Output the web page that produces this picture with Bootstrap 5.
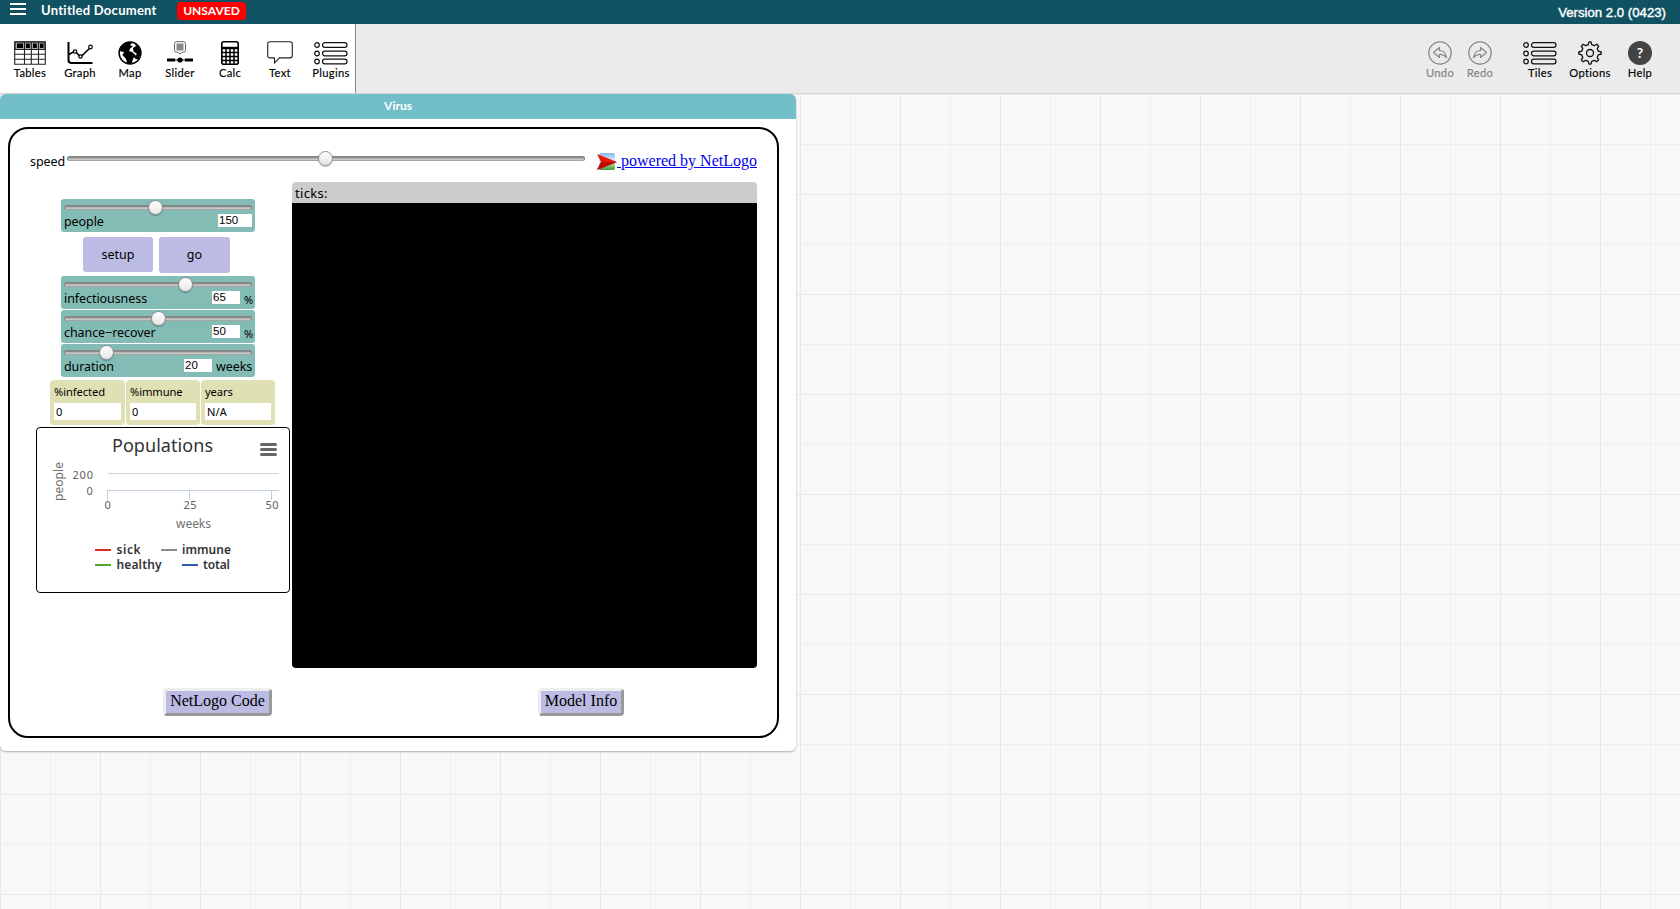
<!DOCTYPE html>
<html lang="en">
<head>
<meta charset="utf-8">
<title>Untitled Document</title>
<link rel="stylesheet" href="https://cdn.jsdelivr.net/npm/bootstrap@5.3.0/dist/css/bootstrap.min.css">
<script src="https://cdn.jsdelivr.net/npm/bootstrap@5.3.0/dist/js/bootstrap.bundle.min.js"></script>
<style>
  body { height: 909px; overflow: hidden; color: #000; font-family: Lato, sans-serif; line-height: 1; background: #f7f7f7; }
  svg { display: block; overflow: visible; }
  .topbar { height: 24px; background: #105262; color: #fff; }
  .menu-icon { margin: 3px 0 0 10px; }
  .doc-name { font-size: 13px; font-weight: 700; margin-left: 15px; padding-top: 4px; width: 117px; letter-spacing: .27px; }
  .unsaved { background: #f00; font-size: 12px; font-weight: 700; border-radius: 4px; width: 69px; height: 18px; line-height: 17px; margin: 2px 0 0 19px; }
  .version { font: 13.2px/1 "Liberation Sans", sans-serif; -webkit-text-stroke: .4px #fff; margin-right: 14px; padding-top: 6px; }
  .toolbar { height: 70px; background: #ebebeb; border-bottom: 1px solid #d6d6d6; }
  .tools { width: 356px; background: #fff; border-right: 1px solid #888; padding-left: 5px; }
  .tool { width: 50px; flex-shrink: 0; padding-top: 17px; font-size: 11.2px; font-weight: 400; letter-spacing: .3px; white-space: nowrap; -webkit-text-stroke: .15px currentColor; }
  .tool svg { height: 24px; margin-bottom: 2px; -webkit-text-stroke: 0; }
  .tool.narrow { width: 40px; }
  .tool.wide { width: 52px; }
  .tool.off { color: #848484; }
  .workspace {
    height: 815px;
    background:
      linear-gradient(90deg, #e9e9e9 1px, transparent 1px) 0 0/100px 100px,
      linear-gradient(#e9e9e9 1px, transparent 1px) 0 0/100px 100px,
      linear-gradient(90deg, #f0f0f0 1px, transparent 1px) 0 0/50px 50px,
      linear-gradient(#f0f0f0 1px, transparent 1px) 0 0/50px 50px, #f8f8f8;
  }
  .tile { width: 796px; height: 657px; background: #fff; border-radius: 6px; box-shadow: 0 1px 2px rgba(0,0,0,.3); overflow: hidden; }
  .tile-title { height: 25px; padding-bottom: 2px; background: #72bfca; color: #fff; font-size: 12px; font-weight: 700; }
  .model { width: 771px; height: 611px; margin: 8px 0 0 8px; border: 2px solid #000; border-radius: 20px; font: 12.5px/1 "Noto Sans", sans-serif; }
  .speed-row { height: 53px; padding: 0 20px; }
  .speed-label { width: 37px; padding-top: 27px; letter-spacing: -.1px; }
  .speed-slider { width: 518px; margin-top: 27px; }
  .track { height: 5px; border-radius: 2.5px; background: linear-gradient(#707070, #b0b0b0 40%, #cfcfcf); border: 1px solid #858585; border-bottom-color: #a5a5a5; position: relative; }
  .thumb { position: absolute; top: -6px; width: 15px; height: 15px; margin-left: -8px; border-radius: 50%; border: 1px solid #8f8f8f; background: linear-gradient(#fdfdfd, #e6e6e6); box-shadow: 0 1px 1px rgba(0,0,0,.25); }
  .powered { font: 16px/18px "Liberation Serif", serif; color: #00e; margin: 23px 0 0 12px; text-decoration: none; }
  .powered u { white-space: pre; }
  .powered svg { margin-top: 1px; }
  .controls { width: 282px; }
  .widget { width: 194px; height: 33px; margin: 0 0 1px 51px; padding: 6px 3px 0; background: #82bcb5; border-radius: 3px; }
  .widget .line { height: 13px; margin-top: 5.5px; white-space: nowrap; letter-spacing: -.07px; }
  .entry { background: #fff; height: 13px; font: 11.5px/13px "Liberation Sans", sans-serif; padding-left: 1px; letter-spacing: 0; margin-top: -1.5px; }
  .unit { width: 8px; margin-left: 4px; }
  .unit.pct { font-size: 11px; padding-top: 1px; letter-spacing: -.5px; }
  .unit.word { width: 36px; }
  .push { background: #bcbbe4; border-radius: 3px; padding-top: 1px; }
  .monitor { background: #dfe0b3; border-radius: 4px; height: 45px; padding: 6px 4px 0; font-size: 11.2px; letter-spacing: -.1px; }
  .monitor div { background: #fff; height: 17px; line-height: 17px; margin-top: 6px; padding-left: 2px; font-size: 11px; letter-spacing: .1px; }
  .plot { width: 254px; height: 166px; margin: 2px 0 0 26px; border: 1px solid #000; border-radius: 4px; }
  .world { width: 465px; }
  .ticks { height: 21px; background: #ccc; border-radius: 4px 4px 0 0; padding: 5px 3px; font-size: 13px; letter-spacing: .3px; }
  .patches { height: 465px; background: #000; border-radius: 0 0 4px 4px; }
  .tab-btn { height: 28px; border: 3px solid; border-color: #eee #999 #999 #eee; border-radius: 4px; background: #bcbbe4; font: 16px/20px "Liberation Serif", serif; padding: 0 0 2px; color: #000; }
</style>
</head>
<body>
<header class="topbar d-flex align-items-start">
  <svg class="menu-icon" width="16" height="13" stroke="#fff" stroke-width="2"><path d="M0 1h16M0 6h16M0 11h16"/></svg>
  <div class="doc-name text-nowrap">Untitled Document</div>
  <div class="unsaved text-center">UNSAVED</div>
  <div class="version ms-auto">Version 2.0 (0423)</div>
</header>
<nav class="toolbar d-flex justify-content-between">
  <div class="tools d-flex">
    <div class="tool d-flex flex-column align-items-center">
      <svg width="32" height="24" fill="none" stroke="#222" stroke-width="1.1"><path d="M1 1h30v7.500H1z" fill="#aaa"/><path d="M.7.7h30.6v22.6H.7zM.7 8.5h30.6M.7 13.3h30.6M.7 18.2h30.6M10.5.7v22.6M17.3.7v22.6M24.500.7v22.6"/><path d="M3 2.5h6v4.400H3zM12 2.500h3.800v4.400H12zM19 2.500h3.800v4.400H19zM26 2.500h3.500v4.400H26z" fill="#000" stroke="none"/></svg>Tables</div>
    <div class="tool d-flex flex-column align-items-center">
      <svg width="26" height="24" fill="none" stroke="#000" stroke-width="2"><path d="M1.500 1v18q0 3 3 3h21"/><path d="M2 13.500l6-3.500 5.500 6 10-9.500" stroke-width="1.6"/><g fill="#fff" stroke-width="1.2"><circle cx="8" cy="10.500" r="1.700"/><circle cx="13.500" cy="15.500" r="1.700"/><circle cx="23.500" cy="6" r="1.800"/></g></svg>Graph</div>
    <div class="tool d-flex flex-column align-items-center">
      <svg width="24" height="24"><circle cx="12" cy="12" r="10.900" fill="#fff" stroke="#000" stroke-width="1.500"/><path d="M3.500 5L8 1.500l7-.5-3 3 3 1.500-2.500 1.500L11 10l3 1 3.500 3-2.500 4-1.500 5h-4L8 18l-3.500-4 1.500-3-4.500-1zM16.500 2.500L21 6l2 6-2.500 6.500-3-.500-1.500-2 3-3-3.500-2.500-.5-3.500 3-2z"/></svg>Map</div>
    <div class="tool d-flex flex-column align-items-center">
      <svg width="26" height="24"><path d="M9.500.7h7q2 0 2 2v6.500q0 2-2 2h-1.500l-2 2-2-2H9.500q-2 0-2-2V2.700q0-2 2-2z" fill="#fff" stroke="#666"/><path d="M9.500 2.500h7v7h-7z" fill="#888"/><path d="M0 17.500h8v3H0zM18 17.500h8v3h-8zM8 18.500h10v1H8z"/><circle cx="13" cy="19" r="2.600"/></svg>Slider</div>
    <div class="tool d-flex flex-column align-items-center">
      <svg width="18" height="24" fill="none" stroke="#000"><rect x=".8" y=".8" width="16.400" height="22.400" rx="2" stroke-width="1.600"/><path d="M1 7h16" stroke-width="2.400"/><path d="M1 11.500h16M1 15.500h16M1 19.500h16M5 7v16M9 7v16M13 7v16" stroke-width="1.500"/></svg>Calc</div>
    <div class="tool d-flex flex-column align-items-center">
      <svg width="26" height="24" fill="#fff" stroke="#222" stroke-width="1.100"><path d="M3 .8h20q2.300 0 2.300 2.300v11.500q0 2.300-2.300 2.300H12.500l-5 5v-5H3Q.7 16.900.7 14.600V3.100Q.7.800 3 .800z"/></svg>Text</div>
    <div class="tool wide d-flex flex-column align-items-center">
      <svg width="34" height="24" fill="#fff" stroke="#111" stroke-width="1.200"><circle cx="3" cy="4" r="2.300"/><circle cx="3" cy="12.500" r="2.300"/><circle cx="3" cy="20.500" r="2.300"/><rect x="8.500" y="1.700" width="24.500" height="4.600" rx="2.300"/><rect x="8.500" y="10.200" width="24.500" height="4.600" rx="2.300"/><rect x="8.500" y="18.200" width="24.500" height="4.600" rx="2.300"/></svg>Plugins</div>
  </div>
  <div class="d-flex" style="margin-right:15px">
    <div class="tool off narrow d-flex flex-column align-items-center">
      <svg width="24" height="24" fill="none" stroke="#858585" stroke-width="1.200"><circle cx="12" cy="12" r="11.200"/><path d="M5.500 11.500l6-5v3q6 0 7 7-3-3.500-7-3v3z" stroke-linejoin="round"/></svg>Undo</div>
    <div class="tool off narrow d-flex flex-column align-items-center">
      <svg width="24" height="24" fill="none" stroke="#858585" stroke-width="1.200"><circle cx="12" cy="12" r="11.200"/><path d="M18.500 11.500l-6-5v3q-6 0-7 7 3-3.500 7-3v3z" stroke-linejoin="round"/></svg>Redo</div>
    <div class="tool d-flex flex-column align-items-center" style="margin-left:15px">
      <svg width="34" height="24" fill="none" stroke="#111" stroke-width="1.200"><circle cx="3" cy="4" r="2.300"/><circle cx="3" cy="12.500" r="2.300"/><circle cx="3" cy="20.500" r="2.300"/><rect x="8.500" y="1.700" width="24.500" height="4.600" rx="2.300"/><rect x="8.500" y="10.200" width="24.500" height="4.600" rx="2.300"/><rect x="8.500" y="18.200" width="24.500" height="4.600" rx="2.300"/></svg>Tiles</div>
    <div class="tool d-flex flex-column align-items-center">
      <svg width="24" height="24" fill="none" stroke="#111" stroke-width="1.300" stroke-linejoin="round"><circle cx="12" cy="12" r="3.500"/><path d="M10.300 3.600L11 .8h2l.7 2.800 2.600 1.100 2.500-1.500 1.900 1.900-1.500 2.500 1.100 2.600 2.900.8v2l-2.900.8-1.100 2.600 1.500 2.500-1.900 1.900-2.500-1.500-2.600 1.100-.7 2.800h-2l-.7-2.800-2.600-1.100-2.500 1.500-1.900-1.900 1.500-2.500-1.100-2.600L.8 13v-2l2.900-.8 1.100-2.600-1.500-2.500 1.900-1.900 2.500 1.500z"/></svg>Options</div>
    <div class="tool d-flex flex-column align-items-center">
      <svg width="24" height="24"><circle cx="12" cy="12" r="12" fill="#444"/><text x="12" y="17" fill="#fff" font-size="14" font-weight="700" text-anchor="middle">?</text></svg>Help</div>
  </div>
</nav>
<main class="workspace">
  <section class="tile">
    <div class="tile-title d-flex justify-content-center align-items-center">Virus</div>
    <div class="model">
      <div class="speed-row d-flex align-items-start">
        <div class="speed-label">speed</div>
        <div class="track speed-slider"><span class="thumb" style="left:50%"></span></div>
        <a class="powered d-flex" href="#"><svg width="20" height="18"><defs><linearGradient id="sky" x2="0" y2="1"><stop stop-color="#88b8f0"/><stop offset=".55" stop-color="#e8f4fa"/><stop offset=".65" stop-color="#9edb8c"/><stop offset="1" stop-color="#3e9c3c"/></linearGradient></defs><rect x="2" y="0" width="16" height="17" rx="2" fill="url(#sky)"/><path d="M0 1l20 8-20 8 4-8z" fill="#e81808"/><path d="M20 9L0 17l4-8z" fill="#b80c08"/></svg><u> powered by NetLogo</u></a>
      </div>
      <div class="d-flex">
        <div class="controls">
          <div class="widget" style="margin-top:17px;margin-bottom:5px"><div class="track"><span class="thumb" style="left:49%"></span></div><div class="line d-flex"><span>people</span><span class="entry ms-auto" style="width:34px">150</span></div></div>
          <div class="d-flex align-items-start" style="margin-left:73px;height:39px;gap:6px">
            <div class="push d-flex align-items-center justify-content-center" style="width:70px;height:35px">setup</div>
            <div class="push d-flex align-items-center justify-content-center" style="width:71px;height:36px">go</div>
          </div>
          <div class="widget"><div class="track"><span class="thumb" style="left:65%"></span></div><div class="line d-flex"><span>infectiousness</span><span class="entry ms-auto" style="width:28px">65</span><span class="unit pct">%</span></div></div>
          <div class="widget"><div class="track"><span class="thumb" style="left:50.5%"></span></div><div class="line d-flex"><span>chance−recover</span><span class="entry ms-auto" style="width:28px">50</span><span class="unit pct">%</span></div></div>
          <div class="widget"><div class="track"><span class="thumb" style="left:22.500%"></span></div><div class="line d-flex"><span>duration</span><span class="entry ms-auto" style="width:28px">20</span><span class="unit word">weeks</span></div></div>
          <div class="d-flex" style="margin:3px 0 0 40px;gap:1px">
            <div class="monitor" style="width:75px">%infected<div>0</div></div>
            <div class="monitor" style="width:74px">%immune<div>0</div></div>
            <div class="monitor" style="width:74px">years<div>N/A</div></div>
          </div>
          <div class="plot">
            <svg width="252" height="164" viewBox="37 428 252 164" font-size="11" fill="#606060">
              <text x="112" y="451.500" font-size="18" fill="#333" textLength="101">Populations</text>
              <path d="M261.500 444.500h14M261.500 449.500h14M261.500 454.500h14" stroke="#666" stroke-width="3" stroke-linecap="round"/>
              <path d="M108 473.500h171" stroke="#d0d6d6"/>
              <path d="M107 490.500h172M107.500 490v10M189.500 490v10M271.500 490v10" stroke="#c0d0e0"/>
              <text x="72.500" y="479" textLength="20.500">200</text><text x="86.500" y="495">0</text>
              <text x="104.500" y="508.500">0</text><text x="183.500" y="508.500" textLength="13">25</text><text x="265.500" y="508.500" textLength="13">50</text>
              <text x="176" y="527.500" font-size="12" fill="#707070" textLength="35">weeks</text>
              <text transform="translate(62.500 501) rotate(-90)" font-size="12" fill="#707070" textLength="39">people</text>
              <g stroke-width="2"><path d="M95 550h16" stroke="#d82c20"/><path d="M161 550h16" stroke="#8c8c8c"/><path d="M95 565h16" stroke="#50a830"/><path d="M182 565h16" stroke="#345ab0"/></g>
              <g fill="#333" font-size="12" font-weight="600"><text x="116.500" y="554" textLength="24">sick</text><text x="182" y="554" textLength="49">immune</text><text x="116.500" y="569" textLength="45">healthy</text><text x="203" y="569" textLength="27">total</text></g>
            </svg>
          </div>
        </div>
        <div class="world"><div class="ticks">ticks:</div><div class="patches"></div></div>
      </div>
      <div class="d-flex" style="margin-top:20px;padding-left:153px;gap:266px">
        <button class="tab-btn" style="width:109px">NetLogo Code</button>
        <button class="tab-btn" style="width:86px">Model Info</button>
      </div>
    </div>
  </section>
</main>
</body>
</html>
